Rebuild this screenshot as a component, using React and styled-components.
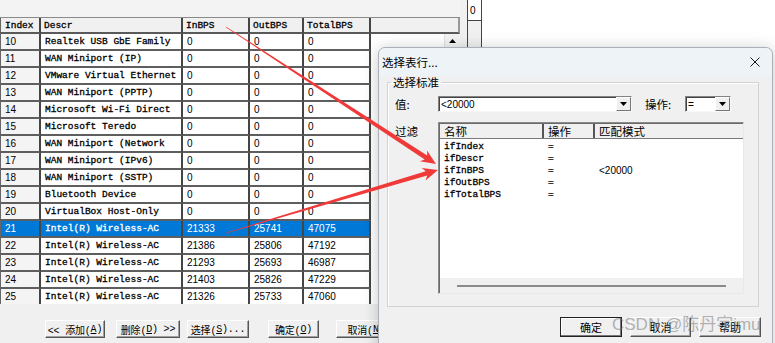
import React from "react";
import styled, { createGlobalStyle } from "styled-components";

const MONO = `"Liberation Mono", "Noto Sans CJK SC", monospace`;
const SANS = `"Liberation Sans", "Noto Sans CJK SC", sans-serif`;
const CJK = `"Noto Sans CJK SC", "Liberation Sans", sans-serif`;

const GlobalStyle = createGlobalStyle`
  html, body { margin: 0; padding: 0; background: #f0f0f0; }
  body { font-family: ${SANS}; }
  * { box-sizing: border-box; }
`;

const Page = styled.div`
  position: relative;
  width: 775px;
  height: 343px;
  overflow: hidden;
  display: flex;
  background: #f0f0f0;
`;

/* ---------- main window ---------- */
const MainWindow = styled.div`
  width: 460px;
  flex-shrink: 0;
  display: flex;
  flex-direction: column;
`;
const TopBand = styled.div`
  height: 17px;
  background: #f3f3f3;
`;
const HeaderRow = styled.div`
  display: grid;
  grid-template-columns: 41px 142px 67px 54px 67px 1fr;
  height: 17px;
  border-top: 1px solid #8a8a8a;
  background: #f0f0f0;
`;
const HeadCell = styled.div`
  font-family: ${MONO};
  font-size: 9.5px;
  -webkit-text-stroke: 0.3px #000;
  color: #000;
  padding-left: ${(p) => (p.$first ? 4 : 3)}px;
  display: flex;
  align-items: center;
  border-right: 2px solid ${(p) => (p.$last ? "#9a9a9a" : "#454545")};
  border-bottom: 2px solid #5a5a5a;
  border-left: ${(p) => (p.$first ? "1px solid #666" : "none")};
`;
const TableBody = styled.div`
  display: flex;
  height: 270px;
  overflow: hidden;
`;
const Rows = styled.div`
  flex: 1;
  display: flex;
  flex-direction: column;
  background: #fff;
`;
const Row = styled.div`
  display: grid;
  grid-template-columns: 41px 142px 67px 54px 67px 1fr;
  height: 17px;
  flex-shrink: 0;
  background: ${(p) => (p.$selected ? "#0078d7" : "#fff")};
  color: ${(p) => (p.$selected ? "#fff" : "#000")};
`;
const Cell = styled.div`
  display: flex;
  align-items: center;
  white-space: nowrap;
  overflow: hidden;
  padding-left: 4px;
  font-family: ${(p) => (p.$mono ? MONO : SANS)};
  font-size: ${(p) => (p.$mono ? "9.5px" : "10px")};
  -webkit-text-stroke: ${(p) => (p.$mono ? "0.3px currentColor" : "0")};
  border-right: 2px solid #454545;
  border-bottom: 2px solid #5e5e5e;
  border-left: ${(p) => (p.$first ? "1px solid #666" : "none")};
  background: ${(p) => (p.$first && !p.$sel ? "#f4f4f4" : "transparent")};
`;
const EmptyCell = styled.div`
  background: #fff;
`;
const VScroll = styled.div`
  width: 16px;
  background: #f0f0f0;
  display: flex;
  flex-direction: column;
  border-left: 1px solid #e0e0e0;
`;
const ScrollBtn = styled.div`
  height: 15px;
  display: flex;
  align-items: center;
  justify-content: center;
  background: #f3f3f3;
  border-bottom: 1px solid #d0d0d0;
`;
const ButtonBar = styled.div`
  flex: 1;
  display: flex;
  align-items: flex-start;
  padding: 16px 0 0 45px;
  background: #f0f0f0;
`;
const WinButton = styled.div`
  flex-shrink: 0;
  width: ${(p) => p.$w}px;
  height: 18px;
  margin-left: ${(p) => p.$ml || 0}px;
  background: #f0f0f0;
  font-family: ${MONO};
  font-size: 10px;
  color: #000;
  border: 1px solid;
  border-color: #ffffff #555 #555 #ffffff;
  box-shadow: inset -1px -1px 0 #a0a0a0;
  display: flex;
  align-items: center;
  justify-content: center;
  white-space: nowrap;
  letter-spacing: -0.2px;
`;

/* ---------- right strip behind dialog ---------- */
const RightStrip = styled.div`
  flex: 1;
  display: flex;
`;
const GrayGap = styled.div`
  width: 7px;
  background: #f0f0f0;
`;
const SideCol = styled.div`
  width: 15px;
  border-left: 1px solid #444;
  border-right: 1px solid #444;
  background: #f0f0f0;
  display: flex;
  flex-direction: column;
`;
const SideCell = styled.div`
  height: 21px;
  background: #fff;
  border-bottom: 1px solid #444;
  font-family: ${SANS};
  font-size: 10px;
  padding: 5px 0 0 2px;
`;
const WhiteArea = styled.div`
  flex: 1;
  background: #fff;
`;

/* ---------- dialog ---------- */
const Dialog = styled.div`
  position: absolute;
  left: 378px;
  top: 47px;
  width: 395px;
  height: 310px;
  background: #f0f0f0;
  border: 1px solid #a9b0b8;
  border-radius: 7px 7px 0 0;
  box-shadow: 0 2px 16px rgba(0, 0, 0, 0.22);
  display: flex;
  flex-direction: column;
`;
const TitleBar = styled.div`
  height: 28px;
  background: #eef3f8;
  border-radius: 7px 7px 0 0;
  display: flex;
  align-items: center;
  justify-content: space-between;
  padding: 0 12px 0 3px;
  font-family: ${CJK};
  font-size: 11.5px;
  color: #000;
`;
const DialogBody = styled.div`
  padding: 0 13px 0 8px;
  display: flex;
  flex-direction: column;
`;
const Group = styled.fieldset`
  margin: 0;
  padding: 7px 7px 12px 7px;
  border: 1px solid #d3d3d3;
  box-shadow: inset 1px 1px 0 #fff;
  display: grid;
  grid-template-columns: 43px 1fr;
  row-gap: 10px;
`;
const Legend = styled.legend`
  font-family: ${CJK};
  font-size: 11.5px;
  line-height: 13px;
  padding: 0 2px;
  margin-left: -4px;
  color: #000;
`;
const Label = styled.div`
  font-family: ${CJK};
  font-size: 11.5px;
  color: #000;
  display: flex;
  align-items: ${(p) => (p.$top ? "flex-start" : "center")};
  padding-top: ${(p) => (p.$top ? 1 : 0)}px;
  height: ${(p) => (p.$top ? "auto" : "16px")};
  line-height: 16px;
`;
const CtrlRow = styled.div`
  display: flex;
  align-items: center;
  height: 16px;
`;
const Combo = styled.div`
  width: ${(p) => p.$w}px;
  height: 16px;
  background: #fff;
  border: 1px solid;
  border-color: #838383 #f8f8f8 #f8f8f8 #838383;
  box-shadow: inset 1px 1px 0 #444;
  display: flex;
  align-items: center;
  padding-left: 2px;
  font-family: ${SANS};
  font-size: 10px;
  color: #000;
`;
const ComboText = styled.span`
  flex: 1;
`;
const DropBtn = styled.div`
  width: 15px;
  height: 14px;
  background: #f0f0f0;
  border: 1px solid;
  border-color: #fff #777 #777 #fff;
  display: flex;
  align-items: center;
  justify-content: center;
`;
const OpLabel = styled(Label)`
  width: 53px;
  padding-left: 13px;
`;
const ListView = styled.div`
  width: 306px;
  height: 172px;
  background: #fff;
  border: 1px solid;
  border-color: #8a8a8a #e8e8e8 #e8e8e8 #8a8a8a;
  box-shadow: inset 1px 1px 0 #6a6a6a;
  display: flex;
  flex-direction: column;
`;
const LvHeader = styled.div`
  display: grid;
  grid-template-columns: 104px 51px 1fr;
  height: 15px;
  margin-left: 1px;
  margin-top: 1px;
  background: #f0f0f0;
  border-bottom: 1px solid #7a7a7a;
`;
const LvHeadCell = styled.div`
  font-family: ${CJK};
  font-size: 11.5px;
  line-height: 14px;
  padding-left: 4px;
  border-right: ${(p) => (p.$last ? "none" : "2px solid #555")};
  color: #000;
`;
const LvItems = styled.div`
  flex: 1;
  padding-top: 1px;
  margin-left: 1px;
  display: flex;
  flex-direction: column;
`;
const LvRow = styled.div`
  display: grid;
  grid-template-columns: 104px 51px 1fr;
  height: 12.2px;
  align-items: center;
`;
const LvCell = styled.div`
  font-family: ${(p) => (p.$sans ? SANS : MONO)};
  font-size: ${(p) => (p.$sans ? "10px" : "9.5px")};
  -webkit-text-stroke: ${(p) => (p.$sans ? "0" : "0.3px #000")};
  padding-left: 4px;
  color: #000;
  white-space: nowrap;
`;
const HScroll = styled.div`
  height: 15px;
  margin-left: 1px;
  background: #f0f0f0;
  display: flex;
  align-items: center;
  padding: 0 17px 0 17px;
`;
const HThumb = styled.div`
  flex: 1;
  height: 2px;
  background: #8a8a8a;
`;
const DlgButtons = styled.div`
  display: flex;
  justify-content: flex-end;
  gap: 8px;
  margin: 10px -2px 0 0;
`;
const DlgButton = styled.div`
  width: ${(p) => p.$w}px;
  height: 20px;
  background: #f0f0f0;
  border: 1px solid;
  border-color: ${(p) => (p.$default ? "#222" : "#fff #555 #555 #fff")};
  box-shadow: ${(p) =>
    p.$default
      ? "inset -1px -1px 0 #777, inset 1px 1px 0 #fff"
      : "inset -1px -1px 0 #a0a0a0"};
  font-family: ${CJK};
  font-size: 11px;
  color: #000;
  display: flex;
  align-items: center;
  justify-content: center;
`;

/* ---------- overlays ---------- */
const Overlay = styled.svg`
  position: absolute;
  left: 0;
  top: 0;
  pointer-events: none;
`;
const Watermark = styled.div`
  position: absolute;
  left: 612px;
  top: 315px;
  font-family: ${SANS};
  font-size: 17px;
  line-height: 20px;
  color: rgba(120, 120, 120, 0.55);
  white-space: nowrap;
  pointer-events: none;
`;

const rows = [
  [10, "Realtek USB GbE Family", 0, 0, 0],
  [11, "WAN Miniport (IP)", 0, 0, 0],
  [12, "VMware Virtual Ethernet", 0, 0, 0],
  [13, "WAN Miniport (PPTP)", 0, 0, 0],
  [14, "Microsoft Wi-Fi Direct", 0, 0, 0],
  [15, "Microsoft Teredo", 0, 0, 0],
  [16, "WAN Miniport (Network", 0, 0, 0],
  [17, "WAN Miniport (IPv6)", 0, 0, 0],
  [18, "WAN Miniport (SSTP)", 0, 0, 0],
  [19, "Bluetooth Device", 0, 0, 0],
  [20, "VirtualBox Host-Only", 0, 0, 0],
  [21, "Intel(R) Wireless-AC", 21333, 25741, 47075],
  [22, "Intel(R) Wireless-AC", 21386, 25806, 47192],
  [23, "Intel(R) Wireless-AC", 21293, 25693, 46987],
  [24, "Intel(R) Wireless-AC", 21403, 25826, 47229],
  [25, "Intel(R) Wireless-AC", 21326, 25733, 47060],
];

const filters = [
  ["ifIndex", "=", ""],
  ["ifDescr", "=", ""],
  ["ifInBPS", "=", "<20000"],
  ["ifOutBPS", "=", ""],
  ["ifTotalBPS", "=", ""],
];

function arrowPoints(x1, y1, x2, y2, w0 = 0.6, w1 = 4.6, headLen = 15, headW = 13) {
  const dx = x2 - x1;
  const dy = y2 - y1;
  const L = Math.hypot(dx, dy);
  const ux = dx / L;
  const uy = dy / L;
  const nx = -uy;
  const ny = ux;
  const bx = x2 - ux * headLen;
  const by = y2 - uy * headLen;
  const nbx = x2 - ux * (headLen - 3);
  const nby = y2 - uy * (headLen - 3);
  const pts = [
    [x1 + (nx * w0) / 2, y1 + (ny * w0) / 2],
    [nbx + (nx * w1) / 2, nby + (ny * w1) / 2],
    [bx + (nx * headW) / 2, by + (ny * headW) / 2],
    [x2, y2],
    [bx - (nx * headW) / 2, by - (ny * headW) / 2],
    [nbx - (nx * w1) / 2, nby - (ny * w1) / 2],
    [x1 - (nx * w0) / 2, y1 - (ny * w0) / 2],
  ];
  return pts.map((p) => p.map((v) => v.toFixed(1)).join(",")).join(" ");
}

const Caret = ({ up }) => (
  <svg width="7" height="4" viewBox="0 0 7 4">
    <path d={up ? "M0 4 L3.5 0 L7 4 Z" : "M0 0 L7 0 L3.5 4 Z"} fill="#000" />
  </svg>
);

const CloseIcon = () => (
  <svg width="10" height="10" viewBox="0 0 10 10">
    <path d="M0.5 0.5 L9.5 9.5 M9.5 0.5 L0.5 9.5" stroke="#1a1a1a" strokeWidth="1" />
  </svg>
);

export default function App() {
  return (
    <>
      <GlobalStyle />
      <Page>
        <MainWindow>
          <TopBand />
          <HeaderRow>
            <HeadCell $first>Index</HeadCell>
            <HeadCell>Descr</HeadCell>
            <HeadCell>InBPS</HeadCell>
            <HeadCell>OutBPS</HeadCell>
            <HeadCell>TotalBPS</HeadCell>
            <HeadCell $last />
          </HeaderRow>
          <TableBody>
            <Rows>
              {rows.map((r) => {
                const sel = r[0] === 21;
                return (
                  <Row key={r[0]} $selected={sel}>
                    <Cell $first $sel={sel}>{r[0]}</Cell>
                    <Cell $mono>{r[1]}</Cell>
                    <Cell>{r[2]}</Cell>
                    <Cell>{r[3]}</Cell>
                    <Cell>{r[4]}</Cell>
                    <EmptyCell />
                  </Row>
                );
              })}
            </Rows>
            <VScroll>
              <ScrollBtn>
                <Caret up />
              </ScrollBtn>
            </VScroll>
          </TableBody>
          <ButtonBar>
            <WinButton $w={60}>&lt;&lt; 添加(<u>A</u>)</WinButton>
            <WinButton $w={64} $ml={11}>删除(<u>D</u>) &gt;&gt;</WinButton>
            <WinButton $w={62} $ml={7}>选择(<u>S</u>)...</WinButton>
            <WinButton $w={51} $ml={19}>确定(<u>O</u>)</WinButton>
            <WinButton $w={60} $ml={17}>取消(<u>N</u>)</WinButton>
          </ButtonBar>
        </MainWindow>

        <RightStrip>
          <GrayGap />
          <SideCol>
            <SideCell>0</SideCell>
          </SideCol>
          <WhiteArea />
        </RightStrip>

        <Dialog>
          <TitleBar>
            <span>选择表行...</span>
            <CloseIcon />
          </TitleBar>
          <DialogBody>
            <Group>
              <Legend>选择标准</Legend>
              <Label>值:</Label>
              <CtrlRow>
                <Combo $w={194}>
                  <ComboText>&lt;20000</ComboText>
                  <DropBtn>
                    <Caret />
                  </DropBtn>
                </Combo>
                <OpLabel>操作:</OpLabel>
                <Combo $w={46}>
                  <ComboText>=</ComboText>
                  <DropBtn>
                    <Caret />
                  </DropBtn>
                </Combo>
              </CtrlRow>
              <Label $top>过滤</Label>
              <ListView>
                <LvHeader>
                  <LvHeadCell>名称</LvHeadCell>
                  <LvHeadCell>操作</LvHeadCell>
                  <LvHeadCell $last>匹配模式</LvHeadCell>
                </LvHeader>
                <LvItems>
                  {filters.map((f) => (
                    <LvRow key={f[0]}>
                      <LvCell>{f[0]}</LvCell>
                      <LvCell>{f[1]}</LvCell>
                      <LvCell $sans>{f[2]}</LvCell>
                    </LvRow>
                  ))}
                </LvItems>
                <HScroll>
                  <HThumb />
                </HScroll>
              </ListView>
            </Group>
            <DlgButtons>
              <DlgButton $w={62} $default>确定</DlgButton>
              <DlgButton $w={61}>取消</DlgButton>
              <DlgButton $w={62}>帮助</DlgButton>
            </DlgButtons>
          </DialogBody>
        </Dialog>

        <Overlay width="775" height="343" viewBox="0 0 775 343">
          <polygon points={arrowPoints(226, 27, 436, 164)} fill="#f03a3a" />
          <polygon points={arrowPoints(226, 233, 438, 170)} fill="#f03a3a" />
        </Overlay>
        <Watermark>CSDN @陈丹宇jmu</Watermark>
      </Page>
    </>
  );
}
